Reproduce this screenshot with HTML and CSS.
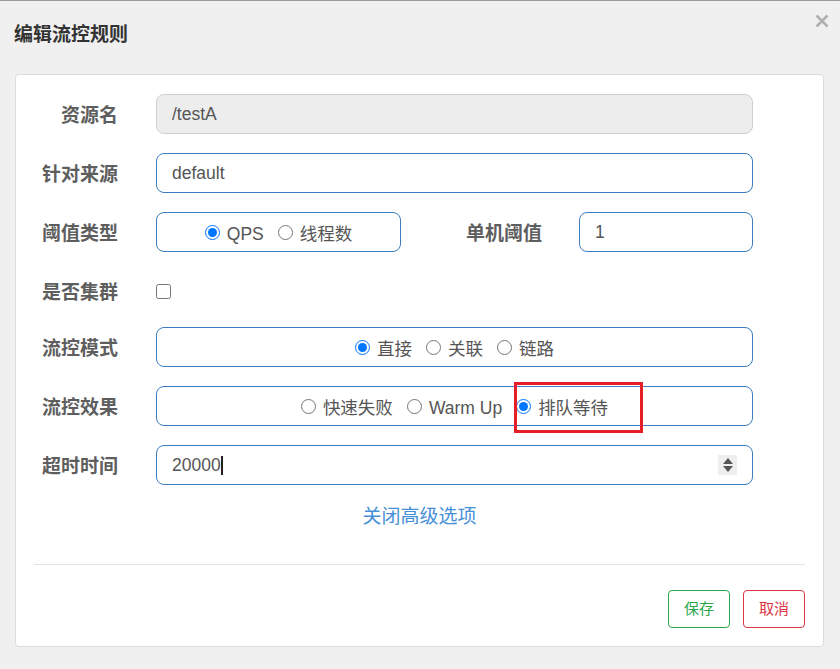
FILE: index.html
```html
<!DOCTYPE html>
<html lang="zh-CN">
<head>
<meta charset="utf-8">
<title>编辑流控规则</title>
<link rel="stylesheet" href="styles.css">
</head>
<body>
<div class="modal">
  <div class="modal-header">
    <h4 class="title">编辑流控规则</h4>
    <span class="close" aria-label="关闭">
      <svg width="14" height="14" viewBox="0 0 14 14"><path d="M1.5 1.5 L12.5 12.5 M12.5 1.5 L1.5 12.5" stroke="#b0b0b0" stroke-width="2.6" stroke-linecap="butt" fill="none"/></svg>
    </span>
  </div>
  <div class="card">
    <div class="form">
      <div class="row">
        <label class="lbl">资源名</label>
        <input class="ctl ctl-disabled" value="/testA" readonly>
      </div>
      <div class="row">
        <label class="lbl">针对来源</label>
        <input class="ctl" value="default">
      </div>
      <div class="row">
        <label class="lbl">阈值类型</label>
        <div class="split">
          <div class="ctl radios">
            <label class="opt"><input type="radio" name="grade" checked><span>QPS</span></label>
            <label class="opt"><input type="radio" name="grade"><span>线程数</span></label>
          </div>
          <label class="lbl">单机阈值</label>
          <input class="ctl" value="1">
        </div>
      </div>
      <div class="row row-check">
        <label class="lbl">是否集群</label>
        <div class="chk-wrap"><input type="checkbox" class="chk"></div>
      </div>
      <div class="row">
        <label class="lbl">流控模式</label>
        <div class="ctl radios">
          <label class="opt"><input type="radio" name="strategy" checked><span>直接</span></label>
          <label class="opt"><input type="radio" name="strategy"><span>关联</span></label>
          <label class="opt"><input type="radio" name="strategy"><span>链路</span></label>
        </div>
      </div>
      <div class="row">
        <label class="lbl">流控效果</label>
        <div class="ctl radios">
          <label class="opt"><input type="radio" name="behavior"><span>快速失败</span></label>
          <label class="opt"><input type="radio" name="behavior"><span>Warm Up</span></label>
          <label class="opt"><input type="radio" name="behavior" checked><span>排队等待</span></label>
        </div>
      </div>
      <div class="row">
        <label class="lbl">超时时间</label>
        <div class="ctl num">
          <span>20000</span><span class="caret"></span>
          <span class="spin"><i class="up"></i><i class="down"></i></span>
        </div>
      </div>
    </div>
    <div class="link">关闭高级选项</div>
    <hr class="divider">
    <div class="footer">
      <button class="btn btn-save">保存</button>
      <button class="btn btn-cancel">取消</button>
    </div>
  </div>
</div>
<div class="highlight"></div>
</body>
</html>
```
FILE: styles.css
```css
html, body {
  margin: 0;
  padding: 0;
}
body {
  background: #f0f0f0;
  border-top: 1px solid #9a9a9a;
  height: 668px;
  position: relative;
  overflow: hidden;
  font-family: "Liberation Sans", "Noto Sans CJK SC", sans-serif;
  color: #555;
}
.modal-header {
  display: flex;
  justify-content: space-between;
  align-items: flex-start;
  height: 73px;
  padding: 0 11px 0 14px;
  box-sizing: border-box;
}
.title {
  margin: 22px 0 0;
  font-size: 19px;
  line-height: 24px;
  font-weight: 700;
  color: #333;
}
.close {
  margin-top: 13px;
  width: 14px;
  height: 14px;
  display: block;
}
.close svg { display: block; }
.card {
  margin-left: 15px;
  width: 809px;
  box-sizing: border-box;
  background: #fff;
  border: 1px solid #dcdcdc;
  border-radius: 4px;
  padding: 19px 0 18px;
}
.form {
  display: flex;
  flex-direction: column;
  gap: 19px;
  padding-right: 70px;
}
.row {
  display: grid;
  grid-template-columns: 102px 1fr;
  column-gap: 38px;
  align-items: center;
  min-height: 40px;
}
.row-check {
  min-height: 0;
  height: 37px;
  padding-top: 3px;
  box-sizing: border-box;
}
.lbl {
  text-align: right;
  font-weight: 700;
  font-size: 19px;
  line-height: 24px;
  color: #5e5e5e;
  position: relative;
  top: 2px;
}
.ctl {
  height: 40px;
  box-sizing: border-box;
  border: 1px solid #3c7ec1;
  border-radius: 8px;
  padding: 0 15px;
  font-family: inherit;
  font-size: 17.5px;
  color: #555;
  background: #fff;
  width: 100%;
  outline: none;
  margin: 0;
}
.ctl-disabled {
  background: #ededed;
  border-color: #cfcfcf;
}
.split {
  display: grid;
  grid-template-columns: 245px 1fr 174px;
  column-gap: 37px;
  align-items: center;
}
.radios {
  display: flex;
  align-items: center;
  justify-content: center;
  gap: 14px;
}
.opt {
  display: inline-flex;
  align-items: center;
  gap: 7px;
  line-height: 24px;
}
.opt span {
  position: relative;
  top: 2px;
}
.opt input {
  width: 15px;
  height: 15px;
  margin: 0;
  accent-color: #0075ff;
}
.chk-wrap {
  display: flex;
  align-items: center;
}
.chk {
  width: 15px;
  height: 15px;
  margin: 0;
}
.num {
  display: flex;
  align-items: center;
}
.caret {
  width: 2px;
  height: 19px;
  background: #222;
  margin-left: 0;
}
.spin {
  margin-left: auto;
  width: 19px;
  height: 20px;
  background: #efefef;
  display: flex;
  flex-direction: column;
  align-items: center;
  justify-content: center;
  gap: 2px;
}
.spin .up {
  width: 0;
  height: 0;
  border-left: 5px solid transparent;
  border-right: 5px solid transparent;
  border-bottom: 6px solid #555;
}
.spin .down {
  width: 0;
  height: 0;
  border-left: 5px solid transparent;
  border-right: 5px solid transparent;
  border-top: 6px solid #555;
}
.link {
  margin-top: 20px;
  text-align: center;
  font-size: 19px;
  line-height: 24px;
  color: #4590d6;
}
.divider {
  margin: 35px 18px 0;
  border: 0;
  border-top: 1px solid #e3e3e3;
  height: 0;
}
.footer {
  display: flex;
  justify-content: flex-end;
  gap: 13px;
  padding-right: 18px;
  margin-top: 25px;
}
.btn {
  width: 62px;
  height: 38px;
  border-radius: 4px;
  background: #fff;
  font-family: inherit;
  font-size: 15px;
  padding: 0 0 3px;
  cursor: pointer;
}
.btn-save {
  border: 1px solid #2aa74a;
  color: #2aa74a;
}
.btn-cancel {
  border: 1px solid #dc3545;
  color: #dc3545;
}
.highlight {
  position: absolute;
  left: 514px;
  top: 381px;
  width: 129px;
  height: 51px;
  border: 3px solid #e61f27;
  box-sizing: border-box;
}
```
